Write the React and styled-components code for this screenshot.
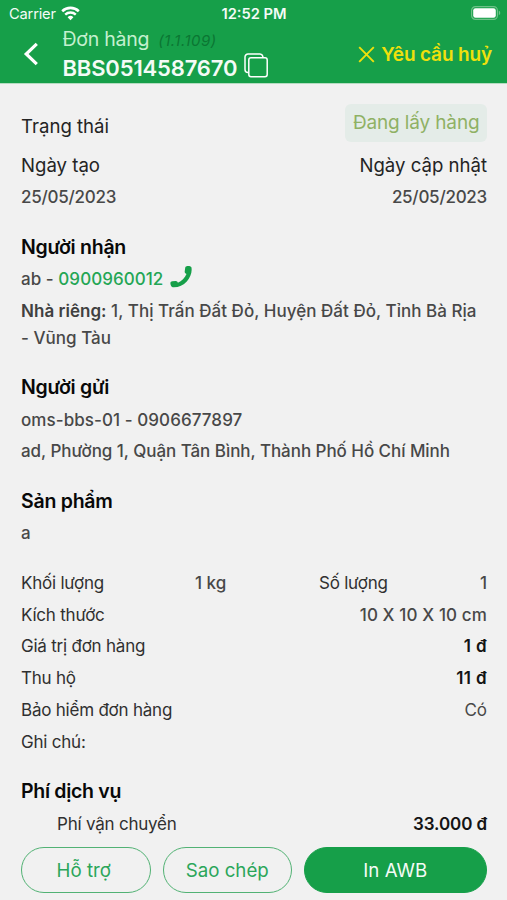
import React from "react"
import styled, { createGlobalStyle } from "styled-components"

const details = [
  { label: "Kích thước", value: "10 X 10 X 10 cm", weight: 500, track: "0.12px" },
  { label: "Giá trị đơn hàng", value: "1 đ", weight: 600, track: "0.4px" },
  { label: "Thu hộ", value: "11 đ", weight: 600, track: "0.4px" },
  { label: "Bảo hiểm đơn hàng", value: "Có" },
  { label: "Ghi chú:", value: "" },
]

function App() {
  return (
    <Screen>
      <GlobalStyle />
      <TopBar>
        <StatusBar>
          <Carrier>
            <Text $size="14.7px">Carrier</Text>
            <WifiIcon />
          </Carrier>
          <Clock>12:52 PM</Clock>
          <BatteryIcon />
        </StatusBar>
        <NavBar>
          <BackIcon />
          <Titles>
            <OrderLine>
              <Text $size="19.5px" $track="-0.25px">
                Đơn hàng
              </Text>
              <Version>(1.1.109)</Version>
            </OrderLine>
            <CodeLine>
              <Text $size="22px" $weight={600} $track="-0.15px">
                BBS0514587670
              </Text>
              <CopyIcon />
            </CodeLine>
          </Titles>
          <CancelButton>
            <CrossIcon />
            <Text $size="19px" $weight={600} $track="-0.15px">
              Yêu cầu huỷ
            </Text>
          </CancelButton>
        </NavBar>
      </TopBar>

      <Content>
        <StatusRow>
          <Label>Trạng thái</Label>
          <StatusTag>Đang lấy hàng</StatusTag>
        </StatusRow>
        <Row>
          <Label>Ngày tạo</Label>
          <Label>Ngày cập nhật</Label>
        </Row>
        <Row>
          <Value $weight={500} $track="-0.25px">
            25/05/2023
          </Value>
          <Value $weight={500} $track="-0.25px">
            25/05/2023
          </Value>
        </Row>

        <Section>
          <Heading>Người nhận</Heading>
          <PhoneLine $weight={500} $track="0.05px">
            <span>
              ab - <a>0900960012</a>
            </span>
            <PhoneIcon />
          </PhoneLine>
          <Value $weight={500} $track="0.03px">
            <b>Nhà riêng:</b> 1, Thị Trấn Đất Đỏ, Huyện Đất Đỏ, Tỉnh Bà Rịa
            <br />- Vũng Tàu
          </Value>
        </Section>

        <Section>
          <Heading>Người gửi</Heading>
          <Value $weight={500} $track="0.07px">
            oms-bbs-01 - 0906677897
          </Value>
          <Value $weight={500} $track="-0.05px">
            ad, Phường 1, Quận Tân Bình, Thành Phố Hồ Chí Minh
          </Value>
        </Section>

        <Section>
          <Heading>Sản phẩm</Heading>
          <Value $weight={500}>a</Value>
        </Section>

        <Details>
          <Measures>
            <DetailLabel>Khối lượng</DetailLabel>
            <Value $weight={500}>1 kg</Value>
            <DetailLabel>Số lượng</DetailLabel>
            <Value $weight={500}>1</Value>
          </Measures>
          {details.map(({ label, value, weight, track }) => (
            <Row key={label}>
              <DetailLabel>{label}</DetailLabel>
              <Value $weight={weight} $track={track}>
                {value}
              </Value>
            </Row>
          ))}
        </Details>

        <Section>
          <Heading $track="-0.3px">Phí dịch vụ</Heading>
          <FeeRow>
            <DetailLabel>Phí vận chuyển</DetailLabel>
            <Value $weight={600} $track="-0.1px">
              33.000 đ
            </Value>
          </FeeRow>
        </Section>
      </Content>

      <Actions>
        <Button>Hỗ trợ</Button>
        <Button>Sao chép</Button>
        <Button $primary>In AWB</Button>
      </Actions>
    </Screen>
  )
}

export default App

const WifiIcon = () => (
  <svg width="19" height="15" viewBox="0 0 19 15" fill="none">
    <path d="M1.2 5.2a12 12 0 0 1 16.6 0" stroke="#fff" strokeWidth="2.6" />
    <path d="M4.2 8.6a7.7 7.7 0 0 1 10.6 0" stroke="#fff" strokeWidth="2.4" />
    <path d="M9.5 14.2 6.6 11.2a4.2 4.2 0 0 1 5.8 0z" fill="#fff" />
  </svg>
)

const BatteryIcon = () => (
  <svg width="30" height="14" viewBox="0 0 30 14">
    <rect x="0.6" y="0.6" width="25.8" height="12.8" rx="3.8" fill="none" stroke="#6dc188" strokeWidth="1.2" />
    <rect x="2.2" y="2.2" width="22.6" height="9.6" rx="2.3" fill="#fff" />
    <path d="M27.8 4.8c1.9.6 1.9 3.8 0 4.4z" fill="#6dc188" />
  </svg>
)

const BackIcon = () => (
  <svg width="16" height="24" viewBox="0 0 16 24" fill="none">
    <path d="M13.8 1.8 3.2 12l10.6 10.2" stroke="#fff" strokeWidth="3.2" />
  </svg>
)

const CopyIcon = () => (
  <svg width="24" height="25" viewBox="0 0 24 25" fill="none" stroke="#fff" strokeWidth="1.5">
    <rect x="4.8" y="4.8" width="18.4" height="19" rx="2.2" />
    <path d="M4.8 19.5H4A3 3 0 0 1 1 16.5V4A3 3 0 0 1 4 1h12A3 3 0 0 1 18.8 3.2V4.5" />
  </svg>
)

const CrossIcon = () => (
  <svg width="17" height="17" viewBox="0 0 17 17" fill="none">
    <path d="M1.2 1.2 15.8 15.8M15.8 1.2 1.2 15.8" stroke="#f0e00c" strokeWidth="1.9" />
  </svg>
)

const PhoneIcon = () => (
  <svg width="22" height="22" viewBox="0 0 22 22" fill="#169f49">
    <path d="M16.6.2C18.6-.2 20.7.2 21.4 1.3 22.4 5.8 20.5 11.5 16.8 15.5 13.2 19.5 8 21.7 2.7 21.3 1.2 20.8.3 18.9.4 17 .5 16 1.2 15.5 2.3 15.3L5.6 14.9C6.9 14.8 7.5 15.5 7.9 16.7 11.6 15.2 14.9 11.8 16.5 8 15.2 7.4 14.6 6.6 14.7 5.5L15.2 1.8C15.4.8 15.7.4 16.6.2Z" />
  </svg>
)

const GlobalStyle = createGlobalStyle`
  * {
    box-sizing: border-box;
  }

  body {
    margin: 0;
    font-family: Inter, "Liberation Sans", sans-serif;
  }

  svg {
    display: block;
    flex: none;
  }
`

const Screen = styled.div`
  width: 507px;
  height: 900px;
  display: flex;
  flex-direction: column;
  overflow: hidden;
  background: #f1f1f1;
`

const Text = styled.span`
  font-size: ${({ $size }) => $size};
  font-weight: ${({ $weight }) => $weight || 400};
  letter-spacing: ${({ $track }) => $track || "-0.2px"};
  white-space: nowrap;
`

const TopBar = styled.header`
  height: 84px;
  flex: none;
  background: #169f49;
  border-bottom: 1px solid #b5dcc1;
  color: #f4fbf6;
`

const StatusBar = styled.div`
  height: 26px;
  display: grid;
  grid-template-columns: 1fr auto 1fr;
  align-items: center;
  padding: 0 6px 0 9px;

  > svg {
    justify-self: end;
  }
`

const Carrier = styled.div`
  display: flex;
  align-items: center;
  gap: 5px;
  padding-top: 1px;
`

const Clock = styled.span`
  padding-top: 1px;
  margin-right: 2px;
  font-size: 14.7px;
  font-weight: 600;
`

const NavBar = styled.div`
  height: 55px;
  display: flex;
  align-items: center;
  padding: 0 15px 0 23px;
`

const Titles = styled.div`
  margin-left: 23.5px;
  flex: 1;
`

const OrderLine = styled.div`
  height: 26px;
  display: flex;
  align-items: center;
  gap: 9px;
  color: #c4f0cf;
`

const Version = styled.span`
  padding-top: 3px;
  font-size: 15px;
  font-style: italic;
  letter-spacing: 0.5px;
  color: #0b7633;
`

const CodeLine = styled.div`
  height: 30px;
  display: flex;
  align-items: center;
  gap: 7px;

  > span {
    padding-top: 2px;
  }

  svg {
    margin-bottom: 2px;
  }
`

const CancelButton = styled.div`
  display: flex;
  align-items: center;
  gap: 6px;
  padding-top: 1px;
  color: #f0e00c;
`

const Content = styled.main`
  flex: 1;
  padding: 20px 20px 0 21px;
`

const Row = styled.div`
  display: flex;
  justify-content: space-between;
`

const StatusRow = styled(Row)`
  height: 46px;
  align-items: flex-start;

  > :first-child {
    padding-top: 7px;
  }
`

const StatusTag = styled.div`
  height: 38px;
  padding: 0 7.5px;
  border-radius: 6px;
  background: #e4ece8;
  color: #8fb164;
  font-size: 19px;
  line-height: 38px;
  letter-spacing: -0.14px;
`

const Label = styled.div`
  font-size: 18.6px;
  line-height: 31.8px;
  color: #242424;
`

const Value = styled.div`
  padding: 2.4px 0;
  font-size: 17px;
  line-height: 27px;
  letter-spacing: ${({ $track }) => $track || "0"};
  font-weight: ${({ $weight }) => $weight || 400};
  color: ${({ $weight }) => ($weight === 600 ? "#141414" : "#484848")};
  white-space: nowrap;

  b {
    font-weight: 600;
    color: #404040;
  }

  a {
    color: #24a655;
  }
`

const PhoneLine = styled(Value)`
  display: flex;
  align-items: center;
  gap: 7px;

  svg {
    margin-bottom: 4px;
  }
`

const DetailLabel = styled(Value)`
  letter-spacing: -0.22px;
  color: #303030;
`

const Section = styled.section`
  margin-top: 17px;
`

const Heading = styled.h2`
  margin: 0;
  font-size: 19.5px;
  font-weight: 600;
  line-height: 33px;
  letter-spacing: ${({ $track }) => $track || "-0.25px"};
  color: #080808;
`

const Details = styled.div`
  margin-top: 18px;
`

const Measures = styled.div`
  display: grid;
  grid-template-columns: 174px 124px 1fr auto;
`

const FeeRow = styled(Row)`
  padding-left: 36px;
`

const Actions = styled.footer`
  height: 54px;
  flex: none;
  display: grid;
  grid-template-columns: 129.5px 129.5px 182.5px;
  gap: 12px;
  padding: 1px 20px 7px 21px;
  background: #f1f1f1;
`

const Button = styled.button`
  padding: 0;
  border: 1.5px solid ${({ $primary }) => ($primary ? "#169f49" : "#52b274")};
  border-radius: 23px;
  background: ${({ $primary }) => ($primary ? "#169f49" : "transparent")};
  color: ${({ $primary }) => ($primary ? "#f4fbf6" : "#2ba65a")};
  font: 400 18.7px Inter, sans-serif;

  &:first-child {
    padding-right: 4px;
  }
`
